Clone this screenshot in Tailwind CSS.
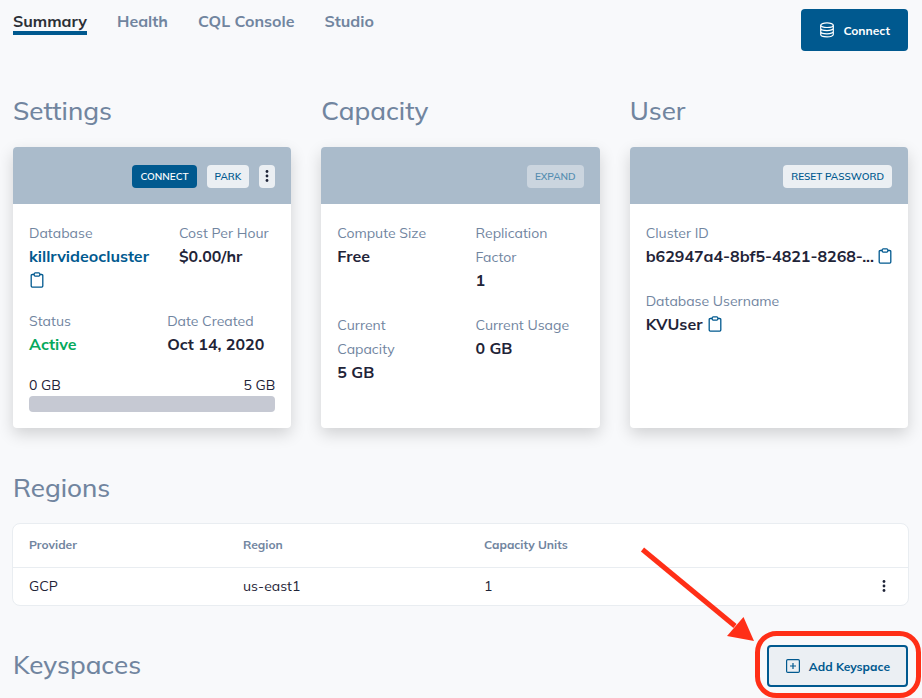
<!DOCTYPE html>
<html lang="en">
<head>
<meta charset="utf-8">
<meta name="viewport" content="width=device-width, initial-scale=1">
<title>killrvideocluster</title>
<script src="https://cdn.jsdelivr.net/npm/@tailwindcss/browser@4"></script>
</head>
<body class="bg-[#f8f9fb] font-['Muli','Mulish','Open_Sans',sans-serif] text-sm text-[#1f2438]">
<svg class="hidden" aria-hidden="true">
  <symbol id="clipboard" viewBox="0 0 14 16">
    <path d="M4 2.500H2.300C1.600 2.500 1.200 2.900 1.200 3.600V14c0 .7.4 1.100 1.100 1.100h9.400c.7 0 1.100-.4 1.100-1.100V3.600c0-.7-.4-1.100-1.100-1.100H10" fill="none" stroke="currentColor" stroke-width="1.300"/>
    <path d="M4.200 1.800c0-.6.4-1 1-1h3.600c.6 0 1 .4 1 1v1.300c0 .6-.4 1-1 1H5.200c-.6 0-1-.4-1-1z" fill="none" stroke="currentColor" stroke-width="1.200"/>
  </symbol>
  <symbol id="dots" viewBox="0 0 4 14">
    <circle cx="2" cy="2.500" r="1.400"/><circle cx="2" cy="7" r="1.400"/><circle cx="2" cy="11.500" r="1.400"/>
  </symbol>
</svg>
<main class="pl-[13px] pr-[14px]">
  <header class="flex items-start justify-between pt-[9px]">
    <nav class="flex gap-[30px] text-base leading-6 font-bold text-[#71859f]">
      <a href="#" class="h-[26px] border-b-4 border-[#00598f] text-[#2c3036]" aria-current="page">Summary</a>
      <a href="#">Health</a>
      <a href="#">CQL Console</a>
      <a href="#">Studio</a>
    </nav>
    <button class="flex h-[42px] items-center gap-2 rounded bg-[#00598f] px-[18px] text-xs font-bold text-white">
      <svg class="h-4 w-4" viewBox="0 0 16 16" fill="none" stroke="currentColor" stroke-width="1.200" aria-hidden="true"><ellipse cx="8" cy="3.200" rx="6.300" ry="2.300"/><path d="M1.700 3.200v9.400c0 1.300 2.800 2.300 6.300 2.300s6.300-1 6.300-2.300V3.200M1.700 6.300c0 1.300 2.800 2.300 6.300 2.300s6.300-1 6.300-2.300M1.700 9.500c0 1.300 2.800 2.300 6.300 2.300s6.300-1 6.300-2.300"/></svg>
      <span class="pt-px">Connect</span>
    </button>
  </header>

  <div class="mt-10 grid grid-cols-3 gap-[30px]">
    <section class="flex flex-col">
      <h2 class="mb-4 text-[26px] leading-10 font-medium text-[#71859f]">Settings</h2>
      <div class="flex-1 overflow-hidden rounded bg-white shadow-[0_6px_16px_rgba(0,0,0,0.16)]">
        <div class="flex h-[57px] items-center justify-end gap-[10px] bg-[#aabbcb] px-4 pt-px text-[10px] font-semibold">
          <button class="h-[23px] rounded bg-[#00598f] px-2 pt-0.5 text-white">CONNECT</button>
          <button class="h-[23px] rounded bg-[#ebeff3] px-2 pt-0.5 text-[#00598f]">PARK</button>
          <button class="flex h-[23px] w-4 items-center justify-center rounded bg-[#ebeff3]" aria-label="More actions"><svg class="h-[14px] w-1 fill-current"><use href="#dots"/></svg></button>
        </div>
        <div class="p-4 text-base leading-6">
          <dl class="grid grid-cols-[120px_1fr] gap-[30px]">
            <div>
              <dt class="text-[#71859f]"><span class="text-sm leading-5">Database</span></dt>
              <dd class="font-bold text-[#00598f]">killrvideocluster
                <button class="flex h-6 w-4 items-center justify-center" aria-label="Copy database name"><svg class="h-4 w-[14px]"><use href="#clipboard"/></svg></button>
              </dd>
            </div>
            <div>
              <dt class="text-[#71859f]"><span class="text-sm leading-5">Cost Per Hour</span></dt>
              <dd class="font-bold">$0.00/hr</dd>
            </div>
          </dl>
          <dl class="mt-4 grid grid-cols-2 gap-[30px]">
            <div>
              <dt class="text-[#71859f]"><span class="text-sm leading-5">Status</span></dt>
              <dd class="font-bold text-[#05a95c]">Active</dd>
            </div>
            <div>
              <dt class="text-[#71859f]"><span class="text-sm leading-5">Date Created</span></dt>
              <dd class="font-bold">Oct 14, 2020</dd>
            </div>
          </dl>
          <div class="mt-4 flex justify-between">
            <div><span class="text-sm leading-5">0 GB</span></div>
            <div><span class="text-sm leading-5">5 GB</span></div>
          </div>
          <div class="h-4 rounded bg-[#c6c9d3]" role="progressbar" aria-label="Storage used" aria-valuemin="0" aria-valuemax="5" aria-valuenow="0"></div>
        </div>
      </div>
    </section>

    <section class="flex flex-col">
      <h2 class="mb-4 text-[26px] leading-10 font-medium text-[#71859f]">Capacity</h2>
      <div class="flex-1 overflow-hidden rounded bg-white shadow-[0_6px_16px_rgba(0,0,0,0.16)]">
        <div class="flex h-[57px] items-center justify-end bg-[#aabbcb] px-4 pt-px text-[10px] font-semibold">
          <button class="h-[23px] rounded bg-[#cbd5df] px-2 pt-0.5 text-[#558db0]" disabled>EXPAND</button>
        </div>
        <dl class="grid grid-cols-2 gap-x-[30px] gap-y-5 p-4 text-base leading-6">
          <div>
            <dt class="text-[#71859f]"><span class="text-sm leading-5">Compute Size</span></dt>
            <dd class="font-bold">Free</dd>
          </div>
          <div>
            <dt class="text-[#71859f]"><span class="text-sm leading-5">Replication<br>Factor</span></dt>
            <dd class="font-bold">1</dd>
          </div>
          <div>
            <dt class="text-[#71859f]"><span class="text-sm leading-5">Current<br>Capacity</span></dt>
            <dd class="font-bold">5 GB</dd>
          </div>
          <div>
            <dt class="whitespace-nowrap text-[#71859f]"><span class="text-sm leading-5">Current Usage</span></dt>
            <dd class="font-bold">0 GB</dd>
          </div>
        </dl>
      </div>
    </section>

    <section class="flex flex-col">
      <h2 class="mb-4 text-[26px] leading-10 font-medium text-[#71859f]">User</h2>
      <div class="flex-1 overflow-hidden rounded bg-white shadow-[0_6px_16px_rgba(0,0,0,0.16)]">
        <div class="flex h-[57px] items-center justify-end bg-[#aabbcb] px-4 pt-px text-[10px] font-semibold">
          <button class="h-[23px] rounded bg-[#ebeff3] px-2 pt-0.5 text-[#00598f]">RESET PASSWORD</button>
        </div>
        <dl class="space-y-5 p-4 text-base leading-6">
          <div>
            <dt class="text-[#71859f]"><span class="text-sm leading-5">Cluster ID</span></dt>
            <dd class="flex items-center justify-between font-bold whitespace-nowrap">b62947a4-8bf5-4821-8268-...
              <button class="text-[#00598f]" aria-label="Copy cluster ID"><svg class="h-4 w-[14px]"><use href="#clipboard"/></svg></button>
            </dd>
          </div>
          <div>
            <dt class="text-[#71859f]"><span class="text-sm leading-5">Database Username</span></dt>
            <dd class="flex items-center gap-[6px] font-bold">KVUser
              <button class="text-[#00598f]" aria-label="Copy username"><svg class="h-4 w-[14px]"><use href="#clipboard"/></svg></button>
            </dd>
          </div>
        </dl>
      </div>
    </section>
  </div>

  <section class="mt-10">
    <h2 class="mb-[15px] text-[26px] leading-10 font-medium text-[#71859f]">Regions</h2>
    <div class="-mx-px rounded-lg border border-[#e9edf1] bg-white">
      <table class="w-full table-fixed text-left">
        <thead>
          <tr class="h-[43px] border-b border-[#e9edf1] text-xs text-[#71859f]">
            <th class="w-[214px] pl-4 font-bold">Provider</th>
            <th class="w-[241px] pl-4 font-bold">Region</th>
            <th class="pl-4 font-bold">Capacity Units</th>
            <th class="w-12"></th>
          </tr>
        </thead>
        <tbody>
          <tr class="h-[38px]">
            <td class="pb-px pl-4">GCP</td>
            <td class="pb-px pl-4">us-east1</td>
            <td class="pb-px pl-4">1</td>
            <td><button class="flex w-full items-center justify-center" aria-label="Region actions"><svg class="h-[14px] w-1 fill-current"><use href="#dots"/></svg></button></td>
          </tr>
        </tbody>
      </table>
    </div>
  </section>

  <section class="mt-[39px] flex items-start justify-between pb-[11px]">
    <h2 class="text-[26px] leading-10 font-medium text-[#71859f]">Keyspaces</h2>
    <div class="relative">
      <button class="flex h-[42px] items-center gap-2 rounded border-2 border-[#00598f] bg-[#ebeff3] px-4 text-xs font-bold text-[#00598f]">
        <svg class="h-4 w-4" viewBox="0 0 16 16" fill="none" stroke="currentColor" stroke-width="1.200" aria-hidden="true"><rect x="1.600" y="1.600" width="12.800" height="12.800" rx="1.200"/><path d="M8 5v6M5 8h6"/></svg>
        <span class="pt-px">Add Keyspace</span>
      </button>
      <svg class="pointer-events-none absolute -right-[13px] -bottom-[11px] h-[154px] w-[284px]" viewBox="0 0 284 154" aria-hidden="true">
        <path d="M5.500 5.500L98 82" stroke="#ff2f17" stroke-width="5"/>
        <path d="M117 97L106.500 73L90 92Z" fill="#ff2f17"/>
        <rect x="120.500" y="89.500" width="161" height="62" rx="19" fill="none" stroke="#ff2f17" stroke-width="5"/>
      </svg>
    </div>
  </section>
</main>
</body>
</html>
